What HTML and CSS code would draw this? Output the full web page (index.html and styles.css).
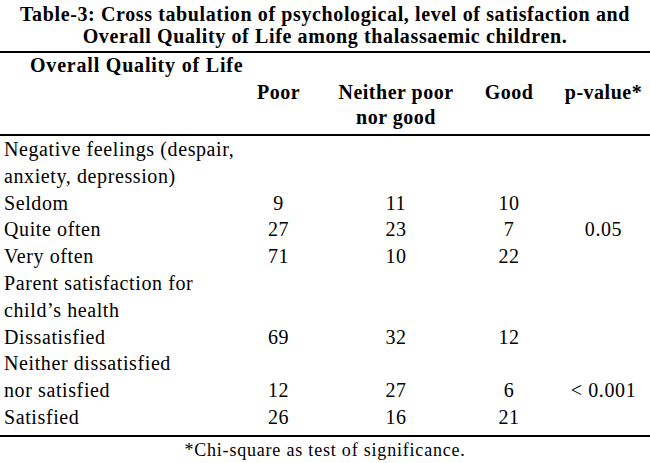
FILE: index.html
```html
<!DOCTYPE html>
<html>
<head>
<meta charset="utf-8">
<link rel="stylesheet" href="styles.css">
</head>
<body>
<div class="page">
  <div class="title">Table-3: Cross tabulation of psychological, level of satisfaction and<br>Overall Quality of Life among thalassaemic children.</div>
  <table class="tab">
    <colgroup>
      <col class="c-label"><col class="c-poor"><col class="c-neither"><col class="c-good"><col class="c-p">
    </colgroup>
    <thead>
      <tr class="h1"><th class="lead" colspan="5">Overall Quality of Life</th></tr>
      <tr class="h2">
        <th></th>
        <th>Poor</th>
        <th>Neither poor<br>nor good</th>
        <th>Good</th>
        <th class="pcol">p-value*</th>
      </tr>
    </thead>
    <tbody>
      <tr><td class="lbl">Negative feelings (despair,</td><td></td><td></td><td></td><td></td></tr>
      <tr><td class="lbl">anxiety, depression)</td><td></td><td></td><td></td><td></td></tr>
      <tr><td class="lbl">Seldom</td><td>9</td><td>11</td><td>10</td><td></td></tr>
      <tr><td class="lbl">Quite often</td><td>27</td><td>23</td><td>7</td><td class="pcol">0.05</td></tr>
      <tr><td class="lbl">Very often</td><td>71</td><td>10</td><td>22</td><td></td></tr>
      <tr><td class="lbl">Parent satisfaction for</td><td></td><td></td><td></td><td></td></tr>
      <tr><td class="lbl">child’s health</td><td></td><td></td><td></td><td></td></tr>
      <tr><td class="lbl">Dissatisfied</td><td>69</td><td>32</td><td>12</td><td></td></tr>
      <tr><td class="lbl">Neither dissatisfied</td><td></td><td></td><td></td><td></td></tr>
      <tr><td class="lbl">nor satisfied</td><td>12</td><td>27</td><td>6</td><td class="pcol">&lt; 0.001</td></tr>
      <tr class="last"><td class="lbl">Satisfied</td><td>26</td><td>16</td><td>21</td><td></td></tr>
    </tbody>
  </table>
  <div class="foot">*Chi-square as test of significance.</div>
</div>
</body>
</html>
```
FILE: styles.css
```css
html, body {
  margin: 0;
  padding: 0;
  background: #fff;
}
.page {
  width: 650px;
  height: 463px;
  overflow: hidden;
  font-family: "Liberation Serif", "Times New Roman", serif;
  color: #000;
}
.title {
  font-weight: bold;
  font-size: 20px;
  line-height: 22px;
  text-align: center;
  padding-top: 3px;
  letter-spacing: 0.62px;
  white-space: nowrap;
}
.tab {
  width: 650px;
  border-collapse: collapse;
  table-layout: fixed;
  margin-top: 4px;
  font-size: 20px;
}
.c-label { width: 240px; }
.c-poor { width: 77px; }
.c-neither { width: 158px; }
.c-good { width: 68px; }
.c-p { width: 107px; }
thead {
  border-top: 2px solid #000;
  border-bottom: 2px solid #000;
}
th {
  font-weight: bold;
  text-align: center;
  vertical-align: top;
  padding: 0;
  line-height: 25px;
  letter-spacing: 0.5px;
  white-space: nowrap;
}
th.lead {
  text-align: left;
  padding-left: 30px;
  line-height: 24px;
  letter-spacing: 0.8px;
}
.h2 th {
  padding-top: 3px;
  padding-bottom: 4px;
}
td {
  padding: 0;
  text-align: center;
  line-height: 26.8px;
  height: 26.8px;
  letter-spacing: 0.6px;
}
td.lbl {
  text-align: left;
  padding-left: 4px;
  white-space: nowrap;
}
.pcol {
  padding-left: 14px;
}
.last td {
  padding-bottom: 4px;
}
tbody {
  border-bottom: 2px solid #000;
}
.foot {
  text-align: center;
  font-size: 18px;
  line-height: 20px;
  padding-top: 3px;
  letter-spacing: 0.8px;
}
```
